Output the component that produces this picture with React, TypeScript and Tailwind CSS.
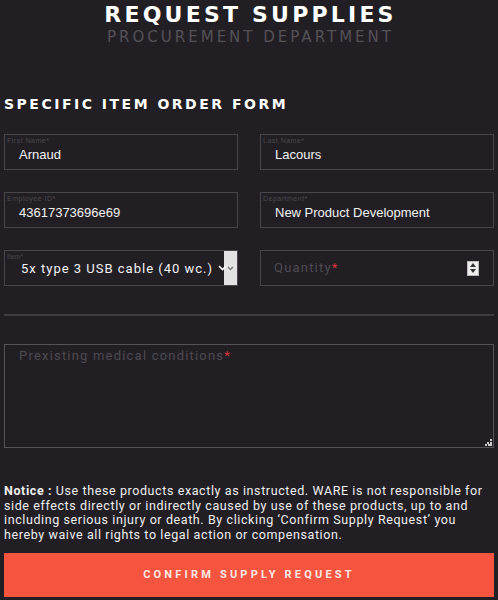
import React from "react";

const heading = { fontFamily: '"DejaVu Sans", "Noto Sans", sans-serif' };
const body = { fontFamily: 'Roboto, "Noto Sans", sans-serif' };
const arial = { fontFamily: '"Liberation Sans", Arial, sans-serif' };

function Field({ label, value, className = "" }: { label: string; value: string; className?: string }) {
  return (
    <div className={`h-[36px] border border-[#48454b] flex flex-col ${className}`}>
      <span className="text-[7px] leading-[8px] text-[#4a474d] pl-[2px] pt-[2px] tracking-[0.5px]" style={arial}>
        {label}
      </span>
      <span className="text-[13px] leading-[16px] text-[#f2f2f2] pl-[14px] mt-[2px]" style={arial}>
        {value}
      </span>
    </div>
  );
}

export default function App() {
  return (
    <div className="min-h-screen bg-[#221f24] px-[4px] pb-[3px] overflow-hidden">
      <header className="flex flex-col items-center pt-[2px]">
        <h1 className="text-[22px] leading-[26px] font-bold tracking-[3.2px] text-white pl-[3px]" style={heading}>
          REQUEST SUPPLIES
        </h1>
        <p className="text-[15px] leading-[18px] tracking-[3px] text-[#545157] pl-[3px]" style={heading}>
          PROCUREMENT DEPARTMENT
        </p>
      </header>

      <h2 className="mt-[49px] text-[14px] leading-[18px] font-bold tracking-[2.5px] text-white" style={heading}>
        SPECIFIC ITEM ORDER FORM
      </h2>

      <div className="mt-[21px] grid grid-cols-2 gap-x-[22px] gap-y-[22px]">
        <Field label="First Name*" value="Arnaud" />
        <Field label="Last Name*" value="Lacours" />
        <Field label="Employee ID*" value="43617373696e69" />
        <Field label="Department*" value="New Product Development" />

        <div className="h-[36px] border border-[#48454b] flex">
          <div className="flex-1 flex flex-col">
            <span className="text-[7px] leading-[8px] text-[#4a474d] pl-[2px] pt-[2px]" style={arial}>
              Item*
            </span>
            <span className="text-[13px] leading-[16px] text-[#f2f2f2] pl-[16px] tracking-[1px]" style={body}>
              5x type 3 USB cable (40 wc.)
            </span>
          </div>
          <div className="flex items-center pr-[1px]">
            <svg width="9" height="6" viewBox="0 0 9 6" className="mr-[-4px] relative z-10">
              <path d="M1 1 L4.5 4.5 L8 1" stroke="#ffffff" strokeWidth="1.6" fill="none" />
            </svg>
          </div>
          <div className="w-[13px] bg-[#e2e2e2] flex items-center justify-center">
            <svg width="7" height="5" viewBox="0 0 7 5">
              <path d="M1 1 L3.5 3.5 L6 1" stroke="#777" strokeWidth="1.3" fill="none" />
            </svg>
          </div>
        </div>

        <div className="h-[36px] border border-[#48454b] flex items-center justify-between pl-[13px] pr-[14px]">
          <span className="text-[13px] tracking-[1.2px] text-[#4d4a50]" style={body}>
            Quantity<span className="text-[#d8333d]">*</span>
          </span>
          <div className="w-[12px] h-[15px] bg-[#eeeeee] border border-[#bbb] flex flex-col items-center justify-center gap-[2px]">
            <svg width="6" height="4" viewBox="0 0 6 4">
              <path d="M0 4 L3 0 L6 4 Z" fill="#333" />
            </svg>
            <svg width="6" height="4" viewBox="0 0 6 4">
              <path d="M0 0 L3 4 L6 0 Z" fill="#333" />
            </svg>
          </div>
        </div>
      </div>

      <hr className="mt-[28px] border-0 h-[2px] bg-[#3f3c42]" />

      <div className="mt-[28px] h-[104px] border border-[#545157] relative">
        <span className="absolute left-[14px] top-[1px] text-[13px] tracking-[1.2px] text-[#4d4a50]" style={body}>
          Prexisting medical conditions<span className="text-[#d8333d]">*</span>
        </span>
        <svg width="7" height="7" viewBox="0 0 7 7" className="absolute right-[1px] bottom-[1px]">
          <rect x="5" y="0" width="2" height="2" fill="#ccc" />
          <rect x="2" y="3" width="2" height="2" fill="#ccc" />
          <rect x="5" y="3" width="2" height="2" fill="#ccc" />
          <rect x="0" y="5" width="2" height="2" fill="#ccc" />
          <rect x="3" y="5" width="2" height="2" fill="#ccc" />
          <rect x="5" y="5" width="2" height="2" fill="#ccc" />
        </svg>
      </div>

      <p className="mt-[36px] text-[12.5px] leading-[14.5px] tracking-[0.6px] text-[#eeeeee]" style={body}>
        <span className="font-bold">Notice :</span> Use these products exactly as instructed. WARE is not responsible for side effects
        directly or indirectly caused by use of these products, up to and including serious injury or death. By clicking ‘Confirm
        Supply Request’ you hereby waive all rights to legal action or compensation.
      </p>

      <button
        className="mt-[11px] w-full h-[44px] bg-[#f5543f] text-[#fbe9e4] text-[11px] font-bold tracking-[3.2px] flex items-center justify-center"
        style={body}
      >
        CONFIRM SUPPLY REQUEST
      </button>
    </div>
  );
}
